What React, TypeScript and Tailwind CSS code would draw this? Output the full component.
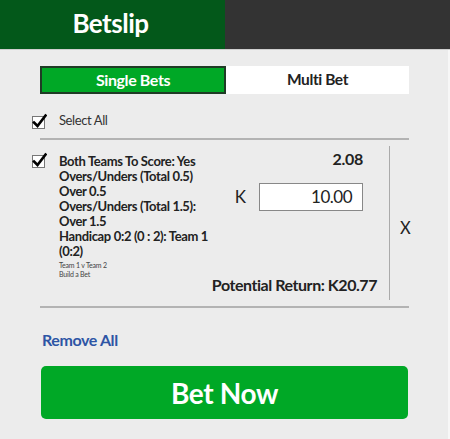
const font = { fontFamily: 'Lato, "Noto Sans", sans-serif' }

function CheckBox() {
  return (
    <svg width="16" height="16" viewBox="0 0 16 16" className="shrink-0">
      <rect x="1.5" y="3.5" width="12" height="12" fill="#fff" stroke="#777" strokeWidth="1" />
      <path d="M3 9.5 L6.5 13 L14.5 2.5" fill="none" stroke="#000" strokeWidth="2.6" strokeLinecap="square" />
    </svg>
  )
}

export default function App() {
  return (
    <div className="w-[450px] h-[439px] bg-[#ececec] text-[#222] overflow-hidden" style={font}>
      <div className="flex h-[50px] border-b border-[#cfcfcf]">
        <div className="w-[225px] bg-[#03581a] flex items-center justify-center">
          <span className="text-white font-bold text-[26px] tracking-[-0.5px] -ml-[4px] -mt-[3px]">Betslip</span>
        </div>
        <div className="flex-1 bg-[#333333]" />
      </div>

      <div className="border-r-2 border-[#f7f7f7] h-full">
        <div className="pt-[16px] pl-[40px] pr-[39px]">
          <div className="flex h-[28px] bg-white">
            <div className="w-[186px] bg-[#00a826] border-2 border-[#1f3b25] flex items-center justify-center text-white font-bold text-[16px] tracking-[-0.4px]">
              Single Bets
            </div>
            <div className="flex-1 flex items-center justify-center font-bold text-[15.5px] text-[#222] tracking-[-0.4px]">
              Multi Bet
            </div>
          </div>
        </div>

        <div className="flex items-center gap-[12px] pl-[31px] mt-[18px] h-[17px]">
          <CheckBox />
          <span className="text-[13px] text-[#333] tracking-[-0.4px]">Select All</span>
        </div>

        <div className="mt-[9px] ml-[40px] mr-[39px] h-[2px] bg-[#b3b3b3]" />

        <div className="flex pl-[31px] pt-[11px] h-[166px]">
          <div className="pt-[1px]">
            <CheckBox />
          </div>
          <div className="ml-[12px] w-[152px] flex flex-col pt-[3px]">
            <div className="font-bold text-[13px] leading-[15px] tracking-[-0.35px] text-[#222]">
              Both Teams To Score: Yes
              <br />
              Overs/Unders (Total 0.5) Over 0.5
              <br />
              Overs/Unders (Total 1.5): Over 1.5
              <br />
              Handicap 0:2 (0 : 2): Team 1 (0:2)
            </div>
            <div className="text-[7px] leading-[9px] text-[#444] tracking-[-0.2px] mt-[2px]">
              Team 1 v Team 2
              <br />
              Build a Bet
            </div>
          </div>
          <div className="w-[166px] flex flex-col items-end pb-[12px]">
            <div className="font-bold text-[16px] leading-[18px] mr-[14px] mt-[-1px] tracking-[-0.3px]">2.08</div>
            <div className="flex items-center mt-[15px] mr-[14px]">
              <span className="text-[17px] mr-[13px]">K</span>
              <div className="w-[104px] h-[28px] bg-white border border-[#888] flex items-center justify-end pr-[10px] text-[17px] tracking-[-0.5px]">
                10.00
              </div>
            </div>
            <div className="mt-auto font-bold text-[16px] tracking-[-0.45px] leading-[18px]">Potential Return: K20.77</div>
          </div>
          <div className="ml-[12px] w-[1px] bg-[#aaaaaa] mt-[-5px] mb-[6px]" />
          <div className="flex-1 flex items-center pl-[10px] text-[16.5px]">X</div>
        </div>

        <div className="ml-[40px] mr-[39px] h-[2px] bg-[#b3b3b3]" />

        <div className="pl-[42px] mt-[23px] text-[#2d55a5] font-bold text-[16px] tracking-[-0.4px] leading-[18px]">
          Remove All
        </div>

        <div className="mt-[17px] ml-[41px] mr-[40px] h-[53px] rounded-[5px] bg-[#00a826] flex items-center justify-center text-white font-bold text-[28px] tracking-[-0.4px]">
          Bet Now
        </div>
      </div>
    </div>
  )
}
